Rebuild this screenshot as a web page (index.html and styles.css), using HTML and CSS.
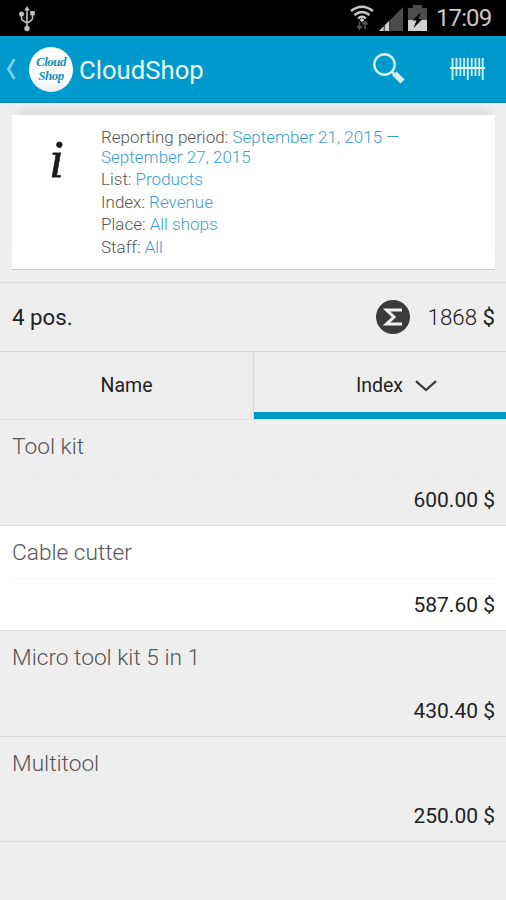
FILE: index.html
```html
<!DOCTYPE html>
<html lang="en">
  <head>
    <meta charset="utf-8" />
    <title>CloudShop</title>

    <link rel="stylesheet" href="styles.css">
  </head>
  <body>
    <div class="status-bar">
      <svg class="usb" width="18" height="28" viewBox="0 0 18 28" fill="none" stroke="#bdbdbd" stroke-width="1.6">
        <path d="M9 4v20M3.500 10v4q0 2 2 3l3.500 2M14.500 9v5q0 2-2 3l-3.500 2" />
        <path d="M9 2l2.800 4.500H6.200z" fill="#bdbdbd" stroke="none" />
        <circle cx="9" cy="24.500" r="2.700" fill="#bdbdbd" stroke="none" />
        <circle cx="3.500" cy="10" r="2.500" fill="#bdbdbd" stroke="none" />
        <path d="M12.200 7h4.600v4.300h-4.600z" fill="#bdbdbd" stroke="none" />
      </svg>
      <div class="status-icons">
        <svg width="24" height="26" viewBox="0 0 24 26" fill="none" stroke="#c8c8c8" stroke-width="2.300">
          <path d="M1 6Q12-2.500 23 6M4.500 10Q12 4 19.500 10M8 13.500Q12 10 16 13.500" />
          <path d="M12 13l2.500 2-2.500 2.300L9.500 15z" fill="#d2d2d2" stroke="none" />
          <path d="M9.500 17v7M7 21l2.500 3 2.500-3M15 24v-7M12.500 19.500l2.500-3 2.500 3" stroke="#555" stroke-width="1.700" />
        </svg>
        <svg class="signal" width="24" height="24" viewBox="0 0 24 24">
          <path d="M24 0v24H0z" fill="#4b4b4b" />
          <path d="M10.500 13.500V24H0z" fill="#cecece" />
          <path d="M5.200 18v6M10.800 12v12" stroke="#222" stroke-width="1" />
        </svg>
        <svg width="19" height="26" viewBox="0 0 19 26">
          <path d="M5 0h9v3h5v23H0V3h5z" fill="#4d4d4d" />
          <path d="M0 15h19v11H0z" fill="#d0d0d0" />
          <path d="M13 7L4.500 15.500h4L5.500 23l9-9h-4z" fill="#000" />
        </svg>
      </div>
      <span class="time">17:09</span>
    </div>

    <div class="action-bar">
      <svg class="back" width="10" height="22" viewBox="0 0 10 22" fill="none" stroke="#7dccea" stroke-width="2.800">
        <path d="M8.500 1L2.500 11l6 10" />
      </svg>
      <div class="logo"><span>Cloud</span><span>Shop</span></div>
      <h1 class="title">CloudShop</h1>
      <svg class="search" width="33" height="32" viewBox="0 0 33 32" fill="none" stroke="#d6f3fd">
        <circle cx="11.500" cy="11.500" r="10.200" stroke-width="2.400" />
        <path d="M18.500 18.500l4 4" stroke-width="2.500" />
        <path d="M21.500 20.500l8 8" stroke-width="6" />
      </svg>
      <svg class="barcode" width="35" height="24" viewBox="0 0 35 24" fill="none" stroke="#c5eaf7" stroke-width="1.900">
        <path d="M2.500 1v22M6.500 1v18M10.400 1v18M14.100 1v18M17.800 1v22M21.700 1v18M25.500 1v18M29.200 1v18M32.700 1v22" />
        <path d="M0 11h35" stroke="#e4f8ff" stroke-width="2.200" />
      </svg>
    </div>

    <div class="info">
      <span class="info-icon">i</span>
      <div class="info-text">
        <p class="period">Reporting period: <a>September 21, 2015 —<br>September 27, 2015</a></p>
        <p>List: <a>Products</a></p>
        <p>Index: <a>Revenue</a></p>
        <p>Place: <a>All shops</a></p>
        <p>Staff: <a>All</a></p>
      </div>
    </div>

    <div class="summary">
      <span class="count">4 pos.</span>
      <svg class="sigma" width="34" height="34" viewBox="0 0 34 34">
        <circle cx="17" cy="17" r="17" fill="#3b3b3b" />
        <path d="M24.500 11.500V10H10.500l7.500 7-7.500 7h14v-1.500" fill="none" stroke="#f0f0f0" stroke-width="3" />
      </svg>
      <span class="total">1868 <b>$</b></span>
    </div>

    <div class="tabs">
      <div class="tab">Name</div>
      <div class="tab active">
        <span>Index</span>
        <svg width="22" height="12" viewBox="0 0 22 12" fill="none" stroke="#3a3a3a" stroke-width="2.200">
          <path d="M1 1.200l10 8.800L21 1.200" />
        </svg>
      </div>
    </div>

    <div class="list">
      <div class="row">
        <span class="name">Tool kit</span>
        <span class="price">600.00 $</span>
      </div>
      <div class="row selected">
        <span class="name">Cable cutter</span>
        <span class="price">587.60 $</span>
      </div>
      <div class="row">
        <span class="name">Micro tool kit 5 in 1</span>
        <span class="price">430.40 $</span>
      </div>
      <div class="row">
        <span class="name">Multitool</span>
        <span class="price">250.00 $</span>
      </div>
    </div>
  </body>
</html>
```

FILE: styles.css
```css
* {
  box-sizing: border-box;
}

body {
  margin: 0;
  height: 900px;
  overflow: hidden;
  font-family: Roboto, sans-serif;
  background-color: #eeeeee;
  color: #222;
}

.status-bar {
  display: flex;
  align-items: center;
  height: 36px;
  padding: 0 14px 0 18px;
  background: #000;
}

.status-icons {
  display: flex;
  align-items: center;
  gap: 5px;
  margin-left: auto;
}

.signal {
  margin-top: 2px;
}

.time {
  margin-left: 9px;
  font-size: 24px;
  line-height: 38px;
  color: #c8c8c8;
  width: 56px;
  letter-spacing: -0.9px;
}

.action-bar {
  display: flex;
  align-items: center;
  height: 67px;
  padding: 0 21px 0 6px;
  background: #0099cc;
  border-bottom: 1px solid #0787b4;
}

.logo {
  display: flex;
  flex-direction: column;
  align-items: center;
  justify-content: center;
  width: 44px;
  height: 45px;
  margin-left: 13px;
  border-radius: 50%;
  background: linear-gradient(#fff 75%, #e8eef1);
  font: italic bold 13px/14px "Liberation Serif", serif;
  letter-spacing: -0.5px;
  color: #1292bd;
}

.title {
  margin: 2px 0 0 6px;
  font-size: 25.700px;
  font-weight: 400;
  line-height: 30px;
  color: #e9f9ff;
}

.search {
  margin-left: auto;
}

.barcode {
  margin-left: 44px;
}

.info {
  display: flex;
  height: 155px;
  margin: 12px 11px 12px 12px;
  background: #fff;
  border-bottom: 1px solid #c9c9c9;
  box-shadow: 0 -10px 10px -6px rgba(0, 0, 0, 0.1);
}

.info-icon {
  width: 89px;
  padding-top: 20px;
  text-align: center;
  font: italic 52px/50px "Liberation Serif", serif;
  -webkit-text-stroke: 0.8px #1c1c1c;
  color: #1c1c1c;
}

.info-text {
  padding-top: 12px;
  font-size: 17px;
  font-weight: 300;
  color: #555;
}

.info-text p {
  margin: 0;
  line-height: 22.500px;
}

.info-text .period {
  line-height: 20px;
  margin-bottom: 1px;
}

.info-text a {
  color: #3a9fd2;
}

.summary {
  display: flex;
  align-items: center;
  height: 69px;
  padding: 0 11px 0 12px;
  border-top: 1px solid #dadada;
  font-size: 22.300px;
}

.sigma {
  margin-left: auto;
}

.total {
  margin-left: 18px;
  font-weight: 300;
}

.total b {
  font-weight: 400;
}

.tabs {
  display: flex;
  height: 69px;
  border-top: 1px solid #dadada;
  border-bottom: 1px solid #dedede;
}

.tab {
  display: flex;
  align-items: center;
  justify-content: center;
  gap: 12px;
  width: 253px;
  font-size: 19.500px;
}

.active {
  position: relative;
  padding-left: 33px;
  border-left: 1px solid #dadada;
}

/* blue underline */
.active::after {
  content: "";
  position: absolute;
  left: 0;
  right: 0;
  bottom: 0;
  height: 7px;
  background: #0099cc;
}

.row {
  display: flex;
  flex-direction: column;
  height: 105.500px;
  padding: 13px 11px 11px 12px;
  border-bottom: 1px solid #dcdcdc;
  line-height: 28px;
}

.selected {
  background: #fff;
}

.name {
  height: 40px;
  border-bottom: 1px dashed #e9e9e9;
  font-size: 22.700px;
  font-weight: 300;
  color: #555;
}

.selected .name {
  border-color: #f3f3f3;
}

.price {
  align-self: flex-end;
  margin-top: auto;
  font-size: 21px;
}
```
